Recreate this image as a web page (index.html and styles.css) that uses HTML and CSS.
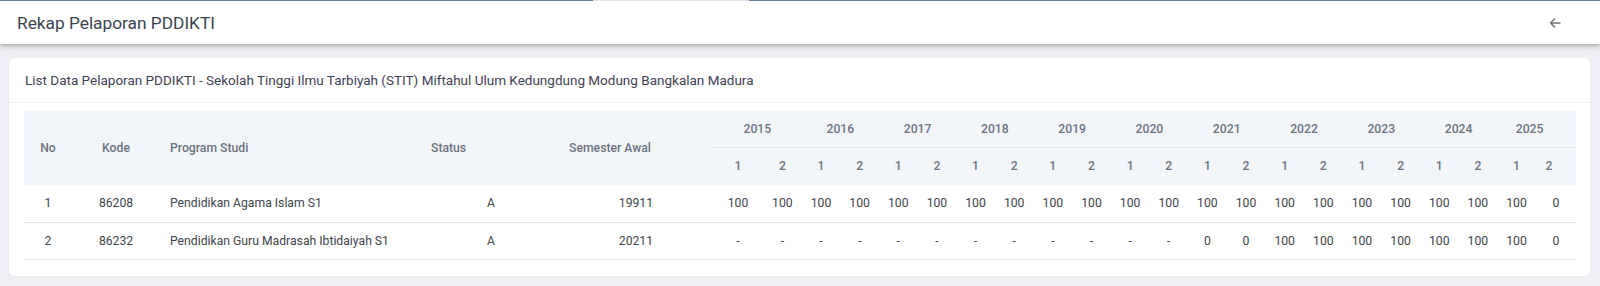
FILE: index.html
```html
<!DOCTYPE html>
<html lang="id">
<head>
<meta charset="utf-8">
<title>Rekap Pelaporan PDDIKTI</title>
<link rel="stylesheet" href="styles.css">
</head>
<body>
<div class="topline"><span class="seg seg-a"></span><span class="seg seg-gap"></span><span class="seg seg-b"></span></div>
<header class="page-header">
  <h1 class="page-title">Rekap Pelaporan PDDIKTI</h1>
  <a class="back-btn" href="#" aria-label="Kembali">
    <svg width="12" height="12" viewBox="0 0 12 12"><path d="M11 6H1.5M5.5 2 1.5 6l4 4" fill="none" stroke="#6b6f76" stroke-width="1.4" stroke-linecap="round" stroke-linejoin="round"/></svg>
  </a>
</header>
<main class="content">
  <section class="card">
    <div class="card-header">List Data Pelaporan PDDIKTI - Sekolah Tinggi Ilmu Tarbiyah (STIT) Miftahul Ulum Kedungdung Modung Bangkalan Madura</div>
    <div class="card-body">
      <table class="rekap">
        <colgroup>
          <col class="c-no"><col class="c-kode"><col class="c-prodi"><col class="c-status"><col class="c-awal">
          <col class="c-s1">
          <col class="c-s"><col class="c-s"><col class="c-s"><col class="c-s"><col class="c-s"><col class="c-s"><col class="c-s"><col class="c-s"><col class="c-s"><col class="c-s">
          <col class="c-s"><col class="c-s"><col class="c-s"><col class="c-s"><col class="c-s"><col class="c-s"><col class="c-s"><col class="c-s"><col class="c-s"><col class="c-s">
          <col class="c-last">
        </colgroup>
        <thead>
          <tr class="yr-row">
            <th rowspan="2" class="center">No</th>
            <th rowspan="2" class="center">Kode</th>
            <th rowspan="2" class="left">Program Studi</th>
            <th rowspan="2" class="h-status">Status</th>
            <th rowspan="2" class="h-awal">Semester Awal</th>
            <th colspan="2" class="yr">2015</th>
            <th colspan="2" class="yr">2016</th>
            <th colspan="2" class="yr">2017</th>
            <th colspan="2" class="yr">2018</th>
            <th colspan="2" class="yr">2019</th>
            <th colspan="2" class="yr">2020</th>
            <th colspan="2" class="yr">2021</th>
            <th colspan="2" class="yr">2022</th>
            <th colspan="2" class="yr">2023</th>
            <th colspan="2" class="yr">2024</th>
            <th colspan="2" class="yr yr-last">2025</th>
          </tr>
          <tr class="sem-row">
            <th>1</th><th>2</th><th>1</th><th>2</th><th>1</th><th>2</th><th>1</th><th>2</th><th>1</th><th>2</th>
            <th>1</th><th>2</th><th>1</th><th>2</th><th>1</th><th>2</th><th>1</th><th>2</th><th>1</th><th>2</th>
            <th>1</th><th class="sem-last">2</th>
          </tr>
        </thead>
        <tbody>
          <tr>
            <td class="center">1</td><td class="center">86208</td><td class="left">Pendidikan Agama Islam S1</td><td class="d-status">A</td><td class="d-awal">19911</td>
            <td>100</td><td>100</td><td>100</td><td>100</td><td>100</td><td>100</td><td>100</td><td>100</td><td>100</td><td>100</td>
            <td>100</td><td>100</td><td>100</td><td>100</td><td>100</td><td>100</td><td>100</td><td>100</td><td>100</td><td>100</td>
            <td>100</td><td>0</td>
          </tr>
          <tr>
            <td class="center">2</td><td class="center">86232</td><td class="left">Pendidikan Guru Madrasah Ibtidaiyah S1</td><td class="d-status">A</td><td class="d-awal">20211</td>
            <td>-</td><td>-</td><td>-</td><td>-</td><td>-</td><td>-</td><td>-</td><td>-</td><td>-</td><td>-</td>
            <td>-</td><td>-</td><td>0</td><td>0</td><td>100</td><td>100</td><td>100</td><td>100</td><td>100</td><td>100</td>
            <td>100</td><td>0</td>
          </tr>
        </tbody>
      </table>
    </div>
  </section>
</main>
</body>
</html>
```

FILE: styles.css
```css
* { box-sizing: border-box; }
html, body { margin: 0; padding: 0; }
body {
  background: #eef0f4;
  font-family: Roboto, "Liberation Sans", Arial, sans-serif;
  color: #3f4254;
  width: 1600px;
  height: 286px;
  overflow: hidden;
}
.topline { display: flex; height: 1px; }
.seg { display: block; height: 1px; }
.seg-a { width: 593px; background: #6f87a6; }
.seg-gap { width: 156px; background: #eceef1; }
.seg-b { flex: 1; background: #6f87a6; }

.page-header {
  height: 43px;
  background: #ffffff;
  display: flex;
  align-items: center;
  justify-content: space-between;
  padding: 0 39px 0 17px;
  box-shadow: 0 2px 5px rgba(0, 0, 0, 0.3);
  position: relative;
  z-index: 1;
}
.page-title {
  margin: 0;
  font-size: 17.3px;
  font-weight: 400;
  color: #3c4350;
}
.back-btn { display: flex; align-items: center; width: 12px; height: 12px; }

.content { padding: 14px 10px 0 9px; }
.card {
  background: #ffffff;
  border-radius: 6px;
  box-shadow: 0 0 4px rgba(0, 0, 0, 0.03);
}
.card-header {
  height: 45px;
  display: flex;
  align-items: center;
  padding: 0 16px;
  border-bottom: 1px solid #eff1f4;
  font-size: 13.5px;
  color: #3f4254;
}
.card-body { padding: 8px 14px 16px 15px; }

.rekap {
  width: 1552px;
  table-layout: fixed;
  border-collapse: collapse;
  font-size: 12.2px;
}
.c-no { width: 48px; }
.c-kode { width: 88px; }
.c-prodi { width: 240px; }
.c-status { width: 100px; }
.c-awal { width: 213px; }
.c-s1 { width: 50px; }
.c-s { width: 38.65px; }
.c-last { width: 40px; }

.rekap thead th {
  background: #f3f6f9;
  color: #6c7280;
  font-weight: 500;
  text-align: center;
  padding: 0;
  white-space: nowrap;
}
.yr-row th { height: 36px; }
.yr-row th.yr { border-bottom: 1px solid #e4e8ee; }
.sem-row th { height: 38px; }
.rekap th.left, .rekap td.left { text-align: left; padding-left: 10px; }
.rekap th.center, .rekap td.center { text-align: center; }
.rekap th.h-status { text-align: left; padding-left: 31px; }
.rekap th.h-awal { padding-left: 7px; }
.rekap th.yr-last, .rekap th.sem-last { padding-right: 14px; }

.rekap tbody td {
  height: 37px;
  padding: 0;
  text-align: center;
  color: #42454c;
  white-space: nowrap;
  border-bottom: 1px solid #e6e8eb;
}
.rekap td.d-status { text-align: right; padding-right: 5px; }
.rekap td.d-awal { text-align: right; padding-right: 60px; }
```
